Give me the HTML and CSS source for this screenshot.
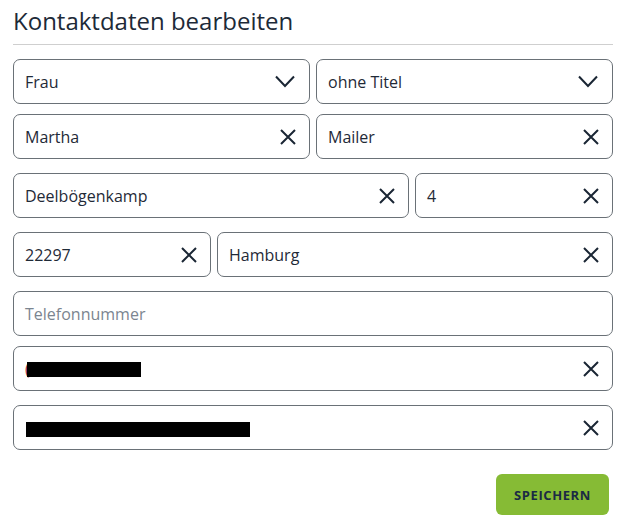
FILE: index.html
```html
<!DOCTYPE html>
<html lang="de">
<head>
<meta charset="utf-8">
<title>Kontaktdaten bearbeiten</title>
<link rel="stylesheet" href="styles.css">
</head>
<body>
<div class="panel">
  <h1 class="title">Kontaktdaten bearbeiten</h1>
  <div class="form">
    <div class="row row-half gap-s">
      <div class="field"><span class="value">Frau</span><svg class="chev" viewBox="0 0 20 13"><path d="M1 1.5 L10 11 L19 1.5"/></svg></div>
      <div class="field"><span class="value">ohne Titel</span><svg class="chev" viewBox="0 0 20 13"><path d="M1 1.5 L10 11 L19 1.5"/></svg></div>
    </div>
    <div class="row row-half gap-l">
      <div class="field"><span class="value">Martha</span><svg class="x" viewBox="0 0 16 16"><path d="M1 1 L15 15 M15 1 L1 15"/></svg></div>
      <div class="field"><span class="value">Mailer</span><svg class="x" viewBox="0 0 16 16"><path d="M1 1 L15 15 M15 1 L1 15"/></svg></div>
    </div>
    <div class="row row-21 gap-l">
      <div class="field"><span class="value">Deelbögenkamp</span><svg class="x" viewBox="0 0 16 16"><path d="M1 1 L15 15 M15 1 L1 15"/></svg></div>
      <div class="field"><span class="value">4</span><svg class="x" viewBox="0 0 16 16"><path d="M1 1 L15 15 M15 1 L1 15"/></svg></div>
    </div>
    <div class="row row-12 gap-l">
      <div class="field"><span class="value">22297</span><svg class="x" viewBox="0 0 16 16"><path d="M1 1 L15 15 M15 1 L1 15"/></svg></div>
      <div class="field"><span class="value">Hamburg</span><svg class="x" viewBox="0 0 16 16"><path d="M1 1 L15 15 M15 1 L1 15"/></svg></div>
    </div>
    <div class="row gap-s">
      <div class="field"><span class="placeholder">Telefonnummer</span></div>
    </div>
    <div class="row gap-l">
      <div class="field"><span class="value redacted-wrap"><span class="peek">(</span><span class="redact r1"></span></span><svg class="x" viewBox="0 0 16 16"><path d="M1 1 L15 15 M15 1 L1 15"/></svg></div>
    </div>
    <div class="row">
      <div class="field"><span class="value redacted-wrap"><span class="redact r2"></span></span><svg class="x" viewBox="0 0 16 16"><path d="M1 1 L15 15 M15 1 L1 15"/></svg></div>
    </div>
  </div>
  <div class="actions">
    <button class="save" type="button">SPEICHERN</button>
  </div>
</div>
</body>
</html>
```

FILE: styles.css
```css
html, body {
  margin: 0;
  padding: 0;
  background: #ffffff;
}
body {
  font-family: "Open Sans", "Liberation Sans", sans-serif;
  color: #1d2a38;
}
.panel {
  width: 600px;
  margin-left: 13px;
}
.title {
  margin: 0;
  padding-top: 4px;
  height: 40px;
  font-size: 24px;
  font-weight: 400;
  line-height: 34px;
  color: #1d2a38;
  border-bottom: 1px solid #cfcfcf;
}
.form {
  margin-top: 14px;
  display: flex;
  flex-direction: column;
}
.row {
  display: grid;
  grid-template-columns: 1fr;
  column-gap: 6px;
}
.row-half { grid-template-columns: 1fr 1fr; }
.row-21 { grid-template-columns: 2fr 1fr; }
.row-12 { grid-template-columns: 1fr 2fr; }
.gap-s { margin-bottom: 10px; }
.gap-l { margin-bottom: 14px; }
.field {
  box-sizing: border-box;
  height: 45px;
  border: 1px solid #6a7177;
  border-radius: 7px;
  display: flex;
  align-items: center;
  justify-content: space-between;
  padding: 0 13px 0 11px;
  font-size: 16px;
}
.value {
  color: #1f2a37;
  display: flex;
  align-items: center;
}
.placeholder {
  color: #7b8590;
}
.chev {
  width: 20px;
  height: 13px;
  fill: none;
  stroke: #1a2634;
  stroke-width: 2;
  margin-right: 1px;
}
.x {
  width: 16px;
  height: 16px;
  fill: none;
  stroke: #1a2634;
  stroke-width: 2;
}
.redacted-wrap {
  height: 20px;
}
.peek {
  color: #a03040;
  font-size: 16px;
  line-height: 20px;
}
.redact {
  display: inline-block;
  background: #000000;
  height: 15px;
}
.r1 {
  width: 114px;
  margin-left: -3px;
  margin-top: 2px;
}
.r2 {
  width: 224px;
  margin-left: 1px;
  margin-top: 3px;
}
.actions {
  display: flex;
  justify-content: flex-end;
  padding-right: 4px;
  margin-top: 24px;
}
.save {
  width: 113px;
  height: 41px;
  border: none;
  border-radius: 6px;
  background: #86bb35;
  color: #1b2a44;
  font-family: "Open Sans", "Liberation Sans", sans-serif;
  font-size: 13px;
  font-weight: 700;
  letter-spacing: 0.6px;
  padding: 0;
}
```
